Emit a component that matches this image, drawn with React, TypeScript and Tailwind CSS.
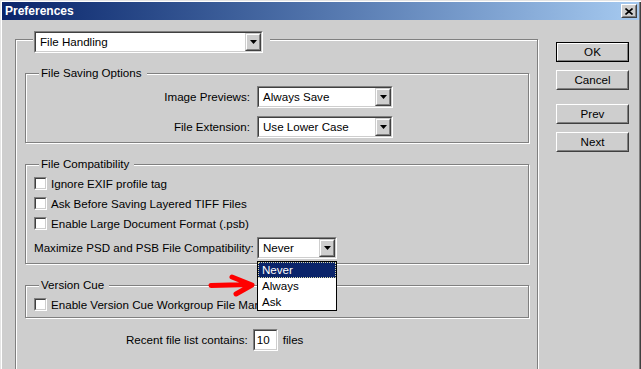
import React from "react";

function Arrow() {
  return (
    <div className="flex w-[16px] border border-t-[#cecece] border-l-[#cecece] border-b-[#404040] border-r-[#404040] bg-[#cecece]">
      <div className="flex flex-1 items-center justify-center border border-t-white border-l-white border-b-[#808080] border-r-[#808080]">
        <svg width="7" height="4" viewBox="0 0 7 4">
          <path d="M0 0h7L3.5 4z" fill="#000" />
        </svg>
      </div>
    </div>
  );
}

function Select({ value, className }: { value: string; className: string }) {
  return (
    <div className={`flex h-[22px] shrink-0 border border-t-[#808080] border-l-[#808080] border-b-white border-r-white ${className}`}>
      <div className="flex flex-1 border border-t-[#404040] border-l-[#404040] border-b-[#cecece] border-r-[#cecece] bg-white">
        <div className="flex flex-1 items-center pl-[4px]">{value}</div>
        <Arrow />
      </div>
    </div>
  );
}

function Check({ label }: { label: string }) {
  return (
    <div className="flex h-[13px] items-center pl-[8px]">
      <div className="h-[13px] w-[13px] border border-t-[#808080] border-l-[#808080] border-b-white border-r-white">
        <div className="h-full w-full border border-t-[#404040] border-l-[#404040] border-b-[#cecece] border-r-[#cecece] bg-white" />
      </div>
      <span className="ml-[4px] whitespace-nowrap">{label}</span>
    </div>
  );
}

function Group({ title, className, children }: { title: string; className: string; children: React.ReactNode }) {
  return (
    <div className={`ml-[9px] w-[504px] border border-[#808080] shadow-[inset_1px_1px_0_#fff,1px_1px_0_#fff] ${className}`}>
      <div className="-mt-[8px] ml-[13px] h-[14px] w-fit bg-[#cecece] pl-[2px] pr-[5px] leading-[14px]">{title}</div>
      {children}
    </div>
  );
}

function Btn({ label, primary }: { label: string; primary?: boolean }) {
  if (primary) {
    return (
      <div className="h-[20px] w-[73px] border border-black">
        <div className="flex h-full items-center justify-center border border-t-white border-l-white border-b-[#808080] border-r-[#808080]">
          {label}
        </div>
      </div>
    );
  }
  return (
    <div className="h-[20px] w-[73px] border border-t-white border-l-white border-b-[#404040] border-r-[#404040]">
      <div className="flex h-full items-center justify-center border border-t-[#cecece] border-l-[#cecece] border-b-[#808080] border-r-[#808080]">
        {label}
      </div>
    </div>
  );
}

export default function App() {
  return (
    <div
      className="relative flex h-[369px] w-[641px] flex-col overflow-hidden bg-[#cecece] text-[11.6px] leading-[14px] text-black shadow-[inset_1px_1px_0_#e4e4e4,inset_2px_2px_0_#fff,inset_-1px_0_0_#404040,inset_-2px_0_0_#808080]"
      style={{ fontFamily: '"Liberation Sans", Arial, sans-serif' }}
    >
      <div className="mx-[2px] mt-[2px] flex h-[18px] shrink-0 items-center justify-between bg-linear-to-r from-[#0a246a] to-[#a6caf0] pl-[3px] pr-[2px]">
        <span className="text-[12px] font-bold text-white">Preferences</span>
        <div className="h-[14px] w-[16px] border border-t-white border-l-white border-b-[#404040] border-r-[#404040] bg-[#cecece]">
          <div className="flex h-full items-center justify-center border border-t-[#cecece] border-l-[#cecece] border-b-[#808080] border-r-[#808080]">
            <svg width="8" height="7" viewBox="0 0 8 7">
              <path d="M0.5 0.5L7.5 6.5M7.5 0.5L0.5 6.5" stroke="#000" strokeWidth="1.6" />
            </svg>
          </div>
        </div>
      </div>

      <div className="flex shrink-0 items-start pl-[15px]">
        <div className="mt-[19px] h-[340px] w-[523px] shrink-0 border border-[#808080] shadow-[inset_1px_1px_0_#fff,1px_1px_0_#fff]">
          <div className="-mt-[9px] ml-[17px] w-fit bg-[#cecece] pl-[1px] pr-[7px]">
            <Select value="File Handling" className="w-[229px]" />
          </div>

          <Group title="File Saving Options" className="mt-[20px] pb-[4px]">
            <div className="mt-[6px] flex items-center">
              <div className="w-[224px] text-right">Image Previews:</div>
              <Select value="Always Save" className="ml-[7px] w-[136px]" />
            </div>
            <div className="mt-[8px] flex items-center">
              <div className="w-[224px] text-right">File Extension:</div>
              <Select value="Use Lower Case" className="ml-[7px] w-[136px]" />
            </div>
          </Group>

          <Group title="File Compatibility" className="mt-[21px] pb-[4px]">
            <div className="mt-[6px] flex flex-col gap-[7px]">
              <Check label="Ignore EXIF profile tag" />
              <Check label="Ask Before Saving Layered TIFF Files" />
              <Check label="Enable Large Document Format (.psb)" />
            </div>
            <div className="mt-[7px] flex items-center">
              <div className="w-[231px] whitespace-nowrap pl-[8px]">Maximize PSD and PSB File Compatibility:</div>
              <Select value="Never" className="w-[80px]" />
            </div>
          </Group>

          <Group title="Version Cue" className="mt-[21px] pb-[6px]">
            <div className="mt-[6px]">
              <Check label="Enable Version Cue Workgroup File Management" />
            </div>
          </Group>

          <div className="ml-[110px] mt-[11px] flex items-center">
            <span>Recent file list contains:</span>
            <div className="ml-[5px] h-[22px] w-[25px] border border-t-[#808080] border-l-[#808080] border-b-white border-r-white">
              <div className="flex h-full items-center border border-t-[#404040] border-l-[#404040] border-b-[#cecece] border-r-[#cecece] bg-white pl-[2px]">
                10
              </div>
            </div>
            <span className="ml-[5px]">files</span>
          </div>
        </div>

        <div className="ml-[18px] mt-[22px] flex flex-col">
          <Btn label="OK" primary />
          <div className="mt-[8px]">
            <Btn label="Cancel" />
          </div>
          <div className="mt-[14px]">
            <Btn label="Prev" />
          </div>
          <div className="mt-[8px]">
            <Btn label="Next" />
          </div>
        </div>
      </div>

      <div className="absolute left-[257px] top-[261px] flex h-[50px] w-[80px] flex-col border border-black bg-white">
        <div className="flex h-[16px] items-center border border-dotted border-[#d8d8a8] bg-[#0a246a] pl-[3px] text-white">Never</div>
        <div className="flex h-[16px] items-center pl-[4px]">Always</div>
        <div className="flex h-[16px] items-center pl-[4px]">Ask</div>
      </div>

      <svg className="absolute left-[207px] top-[273px]" width="52" height="26" viewBox="0 0 52 26">
        <path d="M4 12.5L42 11.5M25 4L45 12L29 21" fill="none" stroke="#ff0000" strokeWidth="5" strokeLinecap="round" strokeLinejoin="round" />
      </svg>
    </div>
  );
}
